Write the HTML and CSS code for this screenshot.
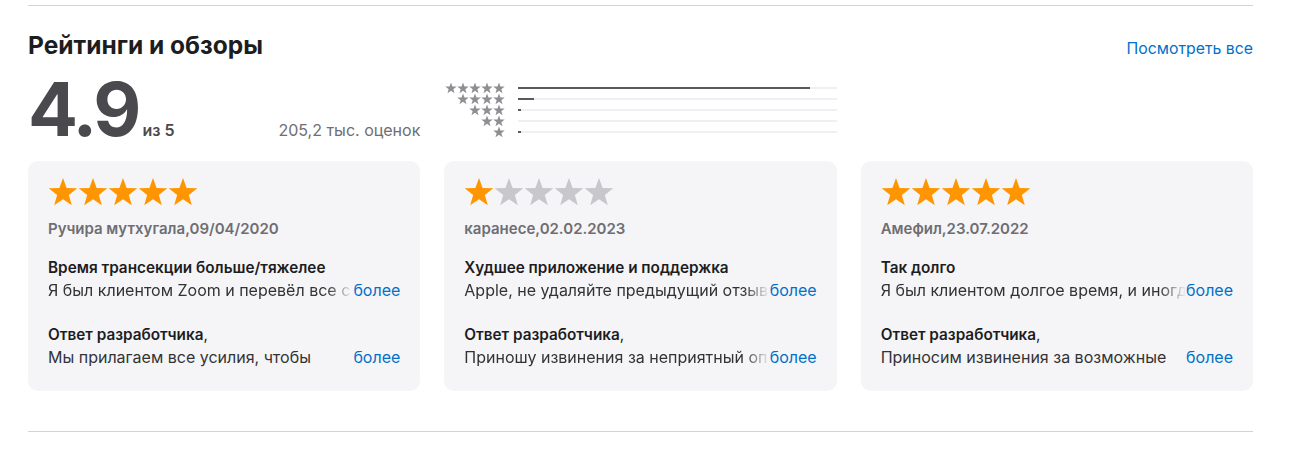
FILE: index.html
```html
<!DOCTYPE html>
<html lang="ru">

<head>
    <meta charset="UTF-8">
    <meta name="viewport" content="width=device-width, initial-scale=1.0">
    <title>Рейтинги и обзоры</title>
    <link rel="stylesheet" href="styles.css">
</head>

<body>
    <svg class="sprite" aria-hidden="true">
        <symbol id="star" viewBox="0 0 24 24">
            <path d="M12 .8L14.88 8.84 23.41 9.09 16.66 14.31 19.05 22.51 12 17.7 4.95 22.51 7.34 14.31 .59 9.09 9.12 8.84Z"></path>
        </symbol>
    </svg>

    <section class="reviews">
        <header class="reviews-head">
            <h2>Рейтинги и обзоры</h2>
            <a class="link" href="#">Посмотреть все</a>
        </header>

        <div class="summary">
            <div class="score">
                <span class="score-value">4.9</span>
                <span class="score-out">из 5</span>
                <span class="score-count">205,2 тыс. оценок</span>
            </div>

            <div class="hist">
                <div class="hist-row">
                    <span class="hist-stars">
                        <svg><use href="#star"></use></svg><svg><use href="#star"></use></svg><svg><use href="#star"></use></svg><svg><use href="#star"></use></svg><svg><use href="#star"></use></svg>
                    </span>
                    <span class="bar"><span class="fill" style="width: 91.5%"></span></span>
                </div>
                <div class="hist-row">
                    <span class="hist-stars">
                        <svg><use href="#star"></use></svg><svg><use href="#star"></use></svg><svg><use href="#star"></use></svg><svg><use href="#star"></use></svg>
                    </span>
                    <span class="bar"><span class="fill" style="width: 5%"></span></span>
                </div>
                <div class="hist-row">
                    <span class="hist-stars">
                        <svg><use href="#star"></use></svg><svg><use href="#star"></use></svg><svg><use href="#star"></use></svg>
                    </span>
                    <span class="bar"><span class="fill" style="width: 0.7%"></span></span>
                </div>
                <div class="hist-row">
                    <span class="hist-stars">
                        <svg><use href="#star"></use></svg><svg><use href="#star"></use></svg>
                    </span>
                    <span class="bar"><span class="fill" style="width: 0%"></span></span>
                </div>
                <div class="hist-row">
                    <span class="hist-stars">
                        <svg><use href="#star"></use></svg>
                    </span>
                    <span class="bar"><span class="fill" style="width: 0.7%"></span></span>
                </div>
            </div>
        </div>

        <div class="cards">
            <article class="card">
                <div class="stars">
                    <svg class="on"><use href="#star"></use></svg><svg class="on"><use href="#star"></use></svg><svg class="on"><use href="#star"></use></svg><svg class="on"><use href="#star"></use></svg><svg class="on"><use href="#star"></use></svg>
                </div>
                <div class="author">Ручира мутхугала,09/04/2020</div>
                <h3 class="title">Время трансекции больше/тяжелее</h3>
                <div class="line">
                    <span class="text fade">Я был клиентом Zoom и перевёл все с</span>
                    <a class="more" href="#">более</a>
                </div>
                <h3 class="title reply">Ответ разработчика<span class="comma">,</span></h3>
                <div class="line">
                    <span class="text">Мы прилагаем все усилия, чтобы</span>
                    <a class="more" href="#">более</a>
                </div>
            </article>

            <article class="card">
                <div class="stars">
                    <svg class="on"><use href="#star"></use></svg><svg><use href="#star"></use></svg><svg><use href="#star"></use></svg><svg><use href="#star"></use></svg><svg><use href="#star"></use></svg>
                </div>
                <div class="author">каранесе,02.02.2023</div>
                <h3 class="title">Худшее приложение и поддержка</h3>
                <div class="line">
                    <span class="text fade">Apple, не удаляйте предыдущий отзыв</span>
                    <a class="more" href="#">более</a>
                </div>
                <h3 class="title reply">Ответ разработчика<span class="comma">,</span></h3>
                <div class="line">
                    <span class="text fade">Приношу извинения за неприятный оп</span>
                    <a class="more" href="#">более</a>
                </div>
            </article>

            <article class="card">
                <div class="stars">
                    <svg class="on"><use href="#star"></use></svg><svg class="on"><use href="#star"></use></svg><svg class="on"><use href="#star"></use></svg><svg class="on"><use href="#star"></use></svg><svg class="on"><use href="#star"></use></svg>
                </div>
                <div class="author">Амефил,23.07.2022</div>
                <h3 class="title">Так долго</h3>
                <div class="line">
                    <span class="text fade">Я был клиентом долгое время, и иногд</span>
                    <a class="more" href="#">более</a>
                </div>
                <h3 class="title reply">Ответ разработчика<span class="comma">,</span></h3>
                <div class="line">
                    <span class="text">Приносим извинения за возможные</span>
                    <a class="more" href="#">более</a>
                </div>
            </article>
        </div>
    </section>
</body>

</html>
```

FILE: styles.css
```css
* {
    box-sizing: border-box;
}

body {
    margin: 0;
    padding-top: 5px;
    background: #fff;
    color: #1d1d1f;
    font-family: Inter, "Noto Sans", sans-serif;
}

.sprite {
    display: none;
}

.reviews {
    width: 1225px;
    margin-left: 28px;
    padding: 25px 0 40px;
    border-top: 1px solid #d2d2d7;
    border-bottom: 1px solid #d2d2d7;
}

.reviews-head {
    display: flex;
    justify-content: space-between;
    align-items: baseline;
}

.reviews-head h2 {
    margin: 0;
    font-size: 24.5px;
    line-height: 28px;
    font-weight: 700;
}

.link {
    color: #0070c9;
    text-decoration: none;
    font-size: 15.8px;
}

.summary {
    display: grid;
    grid-template-columns: repeat(3, minmax(0, 1fr));
    column-gap: 24px;
    margin-top: 12px;
}

.score {
    display: flex;
    align-items: baseline;
}

.score-value {
    font-size: 74px;
    line-height: 76px;
    font-weight: 700;
    letter-spacing: -3px;
    color: #4a4a4e;
}

.score-out {
    margin-left: 4px;
    font-size: 16px;
    font-weight: 600;
    color: #4a4a4e;
}

.score-count {
    margin-left: auto;
    font-size: 16px;
    color: #6e6e73;
}

.hist {
    padding-top: 11px;
}

.hist-row {
    display: flex;
    align-items: center;
    height: 11px;
}

.hist-stars {
    display: flex;
    justify-content: flex-end;
    width: 61px;
    flex-shrink: 0;
}

.hist-stars svg {
    width: 12px;
    height: 12px;
    fill: #8e8e93;
}

.bar {
    flex: 1;
    height: 2px;
    margin-left: 13px;
    background: #efeff4;
}

.fill {
    display: block;
    height: 100%;
    background: #5a5a5e;
}

.cards {
    display: grid;
    grid-template-columns: repeat(3, minmax(0, 1fr));
    column-gap: 24px;
    margin-top: 14px;
}

.card {
    padding: 16px 20px 23px;
    background: #f5f5f7;
    border-radius: 10px;
}

.stars {
    display: flex;
    height: 30px;
}

.stars svg {
    width: 30px;
    height: 30px;
    fill: #c7c7cc;
}

.stars svg.on {
    fill: #ff9500;
}

.author {
    margin-top: 12px;
    font-size: 15px;
    line-height: 20px;
    font-weight: 600;
    color: #6e6e73;
}

.title {
    margin: 18px 0 0;
    font-size: 15.3px;
    line-height: 22px;
    font-weight: 600;
    color: #1d1d1f;
}

.title.reply {
    margin-top: 23px;
}

.comma {
    font-weight: 400;
}

.line {
    display: flex;
    font-size: 16px;
    line-height: 22px;
    color: #333336;
}

.text {
    flex: 1;
    min-width: 0;
    overflow: hidden;
    white-space: nowrap;
}

.text.fade {
    -webkit-mask-image: linear-gradient(to left, transparent 0, #000 26px);
    mask-image: linear-gradient(to left, transparent 0, #000 26px);
}

.more {
    flex-shrink: 0;
    color: #0070c9;
    text-decoration: none;
}
```
